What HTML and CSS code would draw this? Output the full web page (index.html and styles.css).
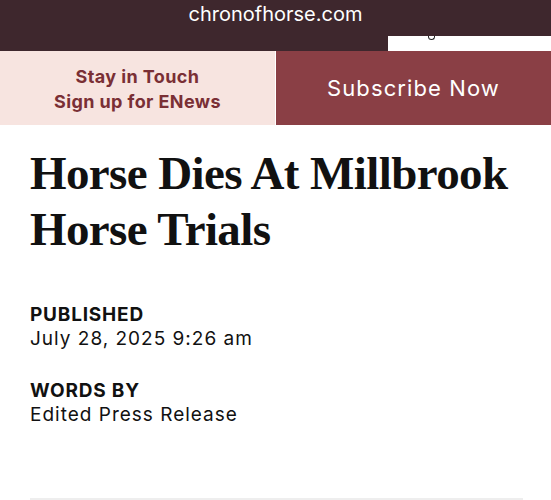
FILE: index.html
```html
<!DOCTYPE html>
<html lang="en">
<head>
    <meta charset="UTF-8">
    <meta name="viewport" content="width=device-width, initial-scale=1.0">
    <title>Horse Dies At Millbrook Horse Trials</title>
    <link rel="stylesheet" href="styles.css">
</head>
<body>

<!-- browser address bar -->
<div class="address-bar">
    <span class="domain">chronofhorse.com</span>
    <div class="search-peek"><i class="descender"></i></div>
</div>

<!-- newsletter / subscribe strip -->
<div class="promo">
    <a class="enews" href="#">Stay in Touch<br>Sign up for ENews</a>
    <a class="subscribe" href="#">Subscribe Now</a>
</div>

<div class="article">
    <h1 class="title">Horse Dies At Millbrook Horse Trials</h1>

    <div class="meta">
        <div class="meta-label">PUBLISHED</div>
        <div class="meta-value">July 28, 2025 9:26 am</div>
    </div>

    <div class="meta">
        <div class="meta-label">WORDS BY</div>
        <div class="meta-value">Edited Press Release</div>
    </div>

    <hr class="divider">
</div>

</body>
</html>
```

FILE: styles.css
```css
body {
    margin: 0;
    background-color: #ffffff;
    font-family: Inter, "Open Sans", Arial, sans-serif;
    color: #111111;
}
.address-bar {
    height: 51px;
    background-color: #3e272d;
    display: flex;
    flex-direction: column;
    align-items: center;
}
.domain {
    font-family: Inter, "Liberation Sans", sans-serif;
    font-size: 20px;
    color: #ffffff;
    line-height: 26px;
    margin-top: 1px;
}
.search-peek {
    align-self: flex-end;
    margin-top: 9px;
    width: 163px;
    height: 15px;
    background-color: #ffffff;
}
.descender {
    display: block;
    margin-left: 40px;
    width: 5px;
    height: 3px;
    border: 1.5px solid #222222;
    border-top: none;
    border-radius: 0 0 4px 4px;
}
.promo {
    display: flex;
    height: 74px;
}
.promo a {
    text-decoration: none;
    display: flex;
    align-items: center;
    justify-content: center;
    text-align: center;
}
.enews {
    width: 275px;
    background-color: #f7e4e0;
    color: #7a2f35;
    font-weight: 700;
    font-size: 18px;
    line-height: 25px;
    letter-spacing: 0.4px;
    padding-top: 2px;
    border-right: 1px solid #ffffff;
}
.subscribe {
    flex: 1;
    background-color: #8a3f45;
    color: #ffffff;
    font-size: 22px;
    font-weight: 400;
    letter-spacing: 1.1px;
}
.article {
    padding: 20px 29px 0 30px;
}
.title {
    margin: 0 0 46px;
    font-family: "Liberation Serif", "Times New Roman", serif;
    font-weight: 700;
    font-size: 47px;
    line-height: 56px;
    letter-spacing: -0.6px;
    color: #111111;
}
.meta {
    margin-bottom: 28px;
}
.meta-label {
    font-weight: 700;
    font-size: 19px;
    line-height: 24px;
    letter-spacing: 0.8px;
}
.meta-value {
    font-size: 19px;
    line-height: 24px;
    letter-spacing: 1px;
}
.divider {
    border: none;
    border-top: 2px solid #eeeeee;
    margin: 71px 0 0;
    width: 493px;
}
```
